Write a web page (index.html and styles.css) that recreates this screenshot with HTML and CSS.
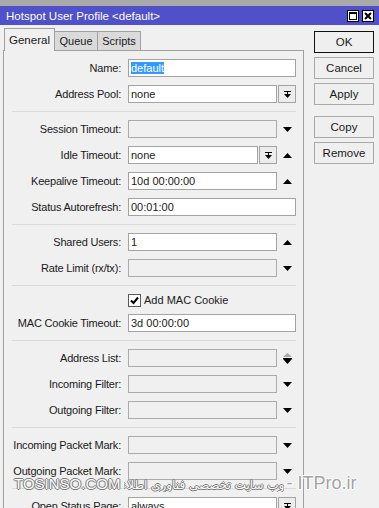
FILE: index.html
```html
<!DOCTYPE html>
<html lang="en">
<head>
  <meta charset="UTF-8" />
  <title>Hotspot User Profile &lt;default&gt;</title>
  <link rel="stylesheet" href="styles.css">
</head>
<body>

  <div class="top-strip"></div>

  <div class="titlebar">
    <span>Hotspot User Profile &lt;default&gt;</span>
    <div class="win-btns">
      <svg width="12" height="12" viewBox="0 0 12 12">
        <rect x="0.5" y="0.5" width="11" height="11" fill="#fff" stroke="#000"/>
        <rect x="2.5" y="2.5" width="7" height="7" fill="#fff" stroke="#000"/>
        <rect x="2" y="2" width="8" height="2" fill="#000"/>
      </svg>
      <svg width="12" height="12" viewBox="0 0 12 12">
        <rect x="0.5" y="0.5" width="11" height="11" fill="#fff" stroke="#000"/>
        <path d="M3 3 L9 9 M9 3 L3 9" stroke="#000" stroke-width="2"/>
      </svg>
    </div>
  </div>

  <div class="window">
    <div class="left">
      <div class="tabs">
        <div class="tab active">General</div>
        <div class="tab">Queue</div>
        <div class="tab">Scripts</div>
      </div>

      <div class="panel">
        <div class="row">
          <span class="lbl">Name:</span>
          <div class="box"><span class="selected">default</span></div>
        </div>
        <div class="row">
          <span class="lbl">Address Pool:</span>
          <div class="box short">none</div>
          <div class="mini"><svg width="7" height="7"><rect x="0" y="0" width="7" height="1" fill="#000"/><rect x="3" y="1" width="1" height="2" fill="#000"/><polygon points="0,3 7,3 3.5,7" fill="#000"/></svg></div>
        </div>

        <div class="sep"></div>

        <div class="row">
          <span class="lbl">Session Timeout:</span>
          <div class="box short off"></div>
          <div class="arrow"><svg width="9" height="5"><polygon points="0,0 9,0 4.5,5" fill="#000"/></svg></div>
        </div>
        <div class="row">
          <span class="lbl">Idle Timeout:</span>
          <div class="box shorter">none</div>
          <div class="mini"><svg width="7" height="7"><rect x="0" y="0" width="7" height="1" fill="#000"/><rect x="3" y="1" width="1" height="2" fill="#000"/><polygon points="0,3 7,3 3.5,7" fill="#000"/></svg></div>
          <div class="arrow"><svg width="9" height="5"><polygon points="0,5 9,5 4.5,0" fill="#000"/></svg></div>
        </div>
        <div class="row">
          <span class="lbl">Keepalive Timeout:</span>
          <div class="box short">10d 00:00:00</div>
          <div class="arrow"><svg width="9" height="5"><polygon points="0,5 9,5 4.5,0" fill="#000"/></svg></div>
        </div>
        <div class="row">
          <span class="lbl">Status Autorefresh:</span>
          <div class="box">00:01:00</div>
        </div>

        <div class="sep"></div>

        <div class="row">
          <span class="lbl">Shared Users:</span>
          <div class="box short">1</div>
          <div class="arrow"><svg width="9" height="5"><polygon points="0,5 9,5 4.5,0" fill="#000"/></svg></div>
        </div>
        <div class="row">
          <span class="lbl">Rate Limit (rx/tx):</span>
          <div class="box short off"></div>
          <div class="arrow"><svg width="9" height="5"><polygon points="0,0 9,0 4.5,5" fill="#000"/></svg></div>
        </div>

        <div class="sep"></div>

        <div class="row check-row">
          <span class="lbl"></span>
          <svg class="checkbox" width="13" height="13" viewBox="0 0 13 13">
            <rect x="0.5" y="0.5" width="12" height="12" fill="#fff" stroke="#5a5a5a"/>
            <path d="M3 6.5 L5.5 9 L10 3.5" fill="none" stroke="#000" stroke-width="2"/>
          </svg>
          <span>Add MAC Cookie</span>
        </div>
        <div class="row">
          <span class="lbl">MAC Cookie Timeout:</span>
          <div class="box">3d 00:00:00</div>
        </div>

        <div class="sep"></div>

        <div class="row">
          <span class="lbl">Address List:</span>
          <div class="box short off"></div>
          <div class="arrow"><svg width="9" height="11"><polygon points="0,4 9,4 4.5,0" fill="#a8a8a8"/><rect x="0" y="5" width="9" height="1" fill="#000"/><polygon points="0,6 9,6 4.5,11" fill="#000"/></svg></div>
        </div>
        <div class="row">
          <span class="lbl">Incoming Filter:</span>
          <div class="box short off"></div>
          <div class="arrow"><svg width="9" height="5"><polygon points="0,0 9,0 4.5,5" fill="#000"/></svg></div>
        </div>
        <div class="row">
          <span class="lbl">Outgoing Filter:</span>
          <div class="box short off"></div>
          <div class="arrow"><svg width="9" height="5"><polygon points="0,0 9,0 4.5,5" fill="#000"/></svg></div>
        </div>

        <div class="sep"></div>

        <div class="row">
          <span class="lbl">Incoming Packet Mark:</span>
          <div class="box short off"></div>
          <div class="arrow"><svg width="9" height="5"><polygon points="0,0 9,0 4.5,5" fill="#000"/></svg></div>
        </div>
        <div class="row">
          <span class="lbl">Outgoing Packet Mark:</span>
          <div class="box short off"></div>
          <div class="arrow"><svg width="9" height="5"><polygon points="0,0 9,0 4.5,5" fill="#000"/></svg></div>
        </div>

        <div class="sep"></div>

        <div class="row">
          <span class="lbl">Open Status Page:</span>
          <div class="box short">always</div>
          <div class="mini"><svg width="7" height="7"><rect x="0" y="0" width="7" height="1" fill="#000"/><rect x="3" y="1" width="1" height="2" fill="#000"/><polygon points="0,3 7,3 3.5,7" fill="#000"/></svg></div>
        </div>
      </div>
    </div>

    <div class="actions">
      <button class="btn default">OK</button>
      <button class="btn">Cancel</button>
      <button class="btn">Apply</button>
      <button class="btn spaced">Copy</button>
      <button class="btn">Remove</button>
    </div>
  </div>

  <div class="watermark">
    <span class="wm-site">TOSINSO.COM</span>
    <span class="wm-fa" dir="rtl">وب سایت تخصصی فناوری اطلاعات</span>
    <span class="wm-it">- ITPro.ir</span>
  </div>

</body>
</html>
```

FILE: styles.css
```css
* {
  box-sizing: border-box;
}

html, body {
  margin: 0;
  height: 508px;
  overflow: hidden;
}

body {
  position: relative;
  background-color: #f0f0f0;
  font-family: 'Liberation Sans', Arial, sans-serif;
  font-size: 11px;
  color: #1a1a1a;
}

.top-strip {
  height: 6px;
  background-color: #a9a9a9;
}

.titlebar {
  height: 19px;
  display: flex;
  align-items: center;
  justify-content: space-between;
  padding: 0 5px 0 6px;
  background-color: #5050c8;
  color: white;
  font-size: 11.5px;
}

.win-btns {
  display: flex;
  gap: 3px;
}

.win-btns svg {
  display: block;
}

.window {
  display: flex;
  align-items: flex-start;
  padding-left: 3px;
}

.left {
  width: 301px;
}

/* tabs */
.tabs {
  display: flex;
  align-items: flex-end;
  height: 25px;
  padding-left: 1px;
}

.tab {
  width: 44px;
  height: 19px;
  margin-left: -1px;
  display: flex;
  align-items: center;
  justify-content: center;
  border: 1px solid #a0a0a0;
  border-bottom: none;
  background-color: #dadada;
}

.tab.active {
  width: 51px;
  height: 23px;
  margin-left: 0;
  margin-bottom: -1px;
  position: relative;
  z-index: 2;
  background-color: #f0f0f0;
  font-size: 11.5px;
}

.panel {
  height: 470px;
  padding-top: 4px;
  border: 1px solid #a0a0a0;
  border-bottom: none;
}

/* form rows */
.row {
  display: flex;
  align-items: center;
  height: 26px;
}

.lbl {
  width: 117px;
  margin-right: 7px;
  text-align: right;
  white-space: nowrap;
  letter-spacing: -0.2px;
}

.box {
  width: 168px;
  height: 18px;
  padding: 0 2px;
  line-height: 16px;
  border: 1px solid #a3a3a3;
  background-color: white;
  white-space: nowrap;
}

.box.short { width: 149px; }
.box.shorter { width: 130px; }
.box.off { background-color: #f0f0f0; border-color: #aaa; }

.selected {
  background-color: #3399ff;
  color: white;
}

.mini {
  width: 18px;
  height: 18px;
  margin-left: 1px;
  display: flex;
  align-items: center;
  justify-content: center;
  border: 1px solid #a3a3a3;
  background-color: #ececec;
}

.mini svg, .arrow svg {
  display: block;
}

.arrow {
  width: 20px;
  display: flex;
  justify-content: center;
}

.sep {
  margin: 4px 7px 4px 8px;
  border-top: 1px solid #dadada;
}

.check-row {
  height: 20px;
}

.checkbox {
  display: block;
  margin-right: 3px;
}

/* right buttons */
.actions {
  width: 60px;
  margin-left: 10px;
  margin-top: 6px;
  display: flex;
  flex-direction: column;
  gap: 4px;
}

.btn {
  height: 22px;
  padding: 0;
  border: 1px solid #a9a9a9;
  background-color: #efefef;
  font-family: inherit;
  font-size: 11.5px;
  color: #1a1a1a;
}

.btn.default {
  border-color: #111;
}

.btn.spaced {
  margin-top: 7px;
}

/* watermark over the bottom */
.watermark {
  position: absolute;
  left: 14px;
  top: 473px;
  display: flex;
  align-items: baseline;
  white-space: nowrap;
}

.wm-site {
  font-size: 15px;
  color: #fbfbfb;
  text-shadow: 1px 0 #7a7a7a, -1px 0 #7a7a7a, 0 1px #7a7a7a, 0 -1px #7a7a7a;
}

.wm-fa {
  width: 160px;
  margin-left: 4px;
  overflow: hidden;
  font-family: 'DejaVu Sans', sans-serif;
  font-size: 12px;
  color: #fbfbfb;
  text-shadow: 1px 0 #7a7a7a, -1px 0 #7a7a7a, 0 1px #7a7a7a, 0 -1px #7a7a7a;
}

.wm-it {
  margin-left: 2px;
  font-size: 18px;
  color: #a3a3a3;
  text-shadow: 1px 0 #fff, -1px 0 #fff, 0 1px #fff, 0 -1px #fff;
}
```
